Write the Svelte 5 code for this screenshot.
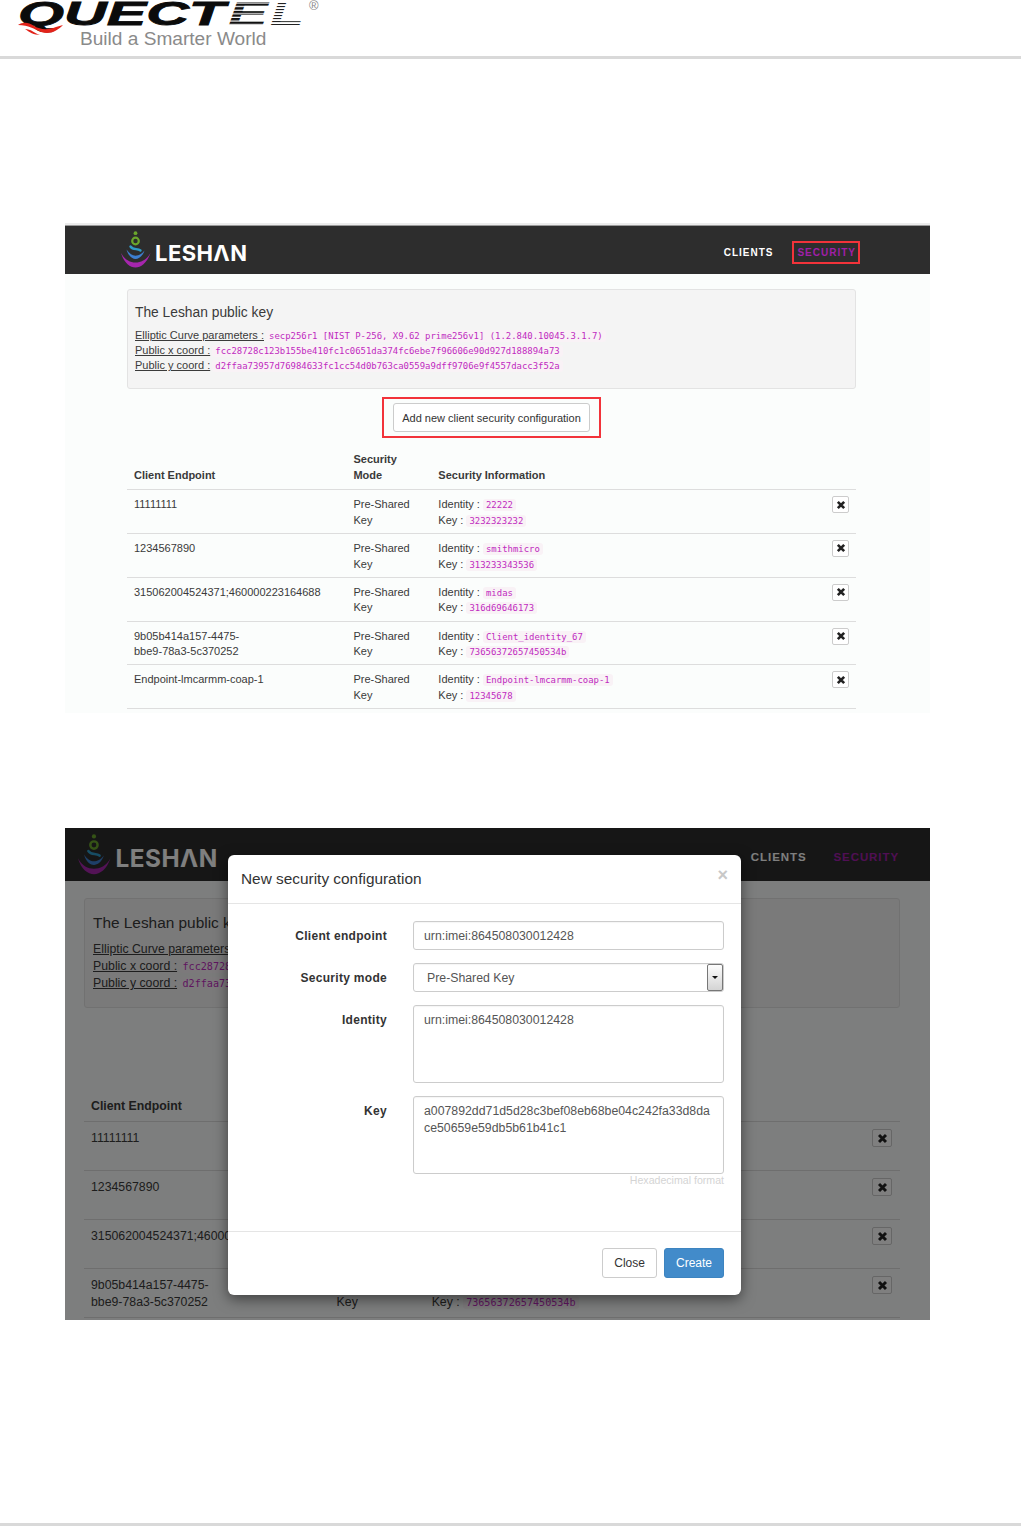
<script>
  const curve = 'secp256r1 [NIST P-256, X9.62 prime256v1] (1.2.840.10045.3.1.7)';
  const xCoord = 'fcc28728c123b155be410fc1c0651da374fc6ebe7f96606e90d927d188894a73';
  const yCoord = 'd2ffaa73957d76984633fc1cc54d0b763ca0559a9dff9706e9f4557dacc3f52a';
  const clients = [
    ['11111111', '22222', '3232323232'],
    ['1234567890', 'smithmicro', '313233343536'],
    ['315062004524371;460000223164688', 'midas', '316d69646173'],
    ['9b05b414a157-4475-\nbbe9-78a3-5c370252', 'Client_identity_67', '73656372657450534b'],
    ['Endpoint-lmcarmm-coap-1', 'Endpoint-lmcarmm-coap-1', '12345678']
  ];
  const endpoint = 'urn:imei:864508030012428';
</script>

{#snippet leshanApp(highlight)}
  <nav class="topnav">
    <svg class="leshan" viewBox="0 0 127 38" role="img" aria-label="Leshan">
      <circle cx="15.5" cy="2.2" r="1.9" fill="#6aa62c" />
      <circle cx="15.5" cy="10" r="3.3" fill="none" stroke="#6aa62c" stroke-width="2.2" />
      <path d="M10.500 15.500C13 19.500 17.500 17 20.500 19.500" fill="none" stroke="#2f9bc8" stroke-width="2.4" stroke-linecap="round" />
      <path d="M6.500 18.500C8.500 25.500 12.500 28 15.500 28C18.500 28 22.500 25.500 24.500 19.500C21.500 23.500 18.500 24.700 15.500 24.700C12.500 24.700 9.500 23 6.500 18.500z" fill="#3d7fd0" />
      <path d="M1 22C4 32 10 36.500 15.500 36.500C21 36.500 27 32 30.500 22C26.500 29 21 31.500 15.500 31.500C10 31.500 5 29 1 22z" fill="#a626ad" />
      <text class="leshan-word" x="35" y="30" textLength="92" lengthAdjust="spacing">LESHΛN</text>
    </svg>
    <div class="nav-links">
      <span class="nav-link">CLIENTS</span>
      <span class="nav-link active" class:outlined={highlight}>SECURITY</span>
    </div>
  </nav>
  <div class="content">
    <section class="well">
      <h4>The Leshan public key</h4>
      <div class="key-line"><u>Elliptic Curve parameters :</u> <code>{curve}</code></div>
      <div class="key-line"><u>Public x coord :</u> <code>{xCoord}</code></div>
      <div class="key-line"><u>Public y coord :</u> <code>{yCoord}</code></div>
    </section>
    <div class="add-row">
      <div class="add-box" class:outlined={highlight}>
        <button class="add-btn">Add new client security configuration</button>
      </div>
    </div>
    <table>
      <thead>
        <tr>
          <th class="c1">Client Endpoint</th>
          <th class="c2">Security<br />Mode</th>
          <th>Security Information</th>
          <th class="c4"></th>
        </tr>
      </thead>
      <tbody>
        {#each clients as [id, identity, key]}
          <tr>
            <td class="endpoint">{id}</td>
            <td>Pre-Shared Key</td>
            <td>
              <div class="info">Identity : <code>{identity}</code></div>
              <div class="info">Key : <code>{key}</code></div>
            </td>
            <td class="c4">
              <span class="del">
                <svg viewBox="0 0 12 12" aria-hidden="true"><path d="M2.200 2.200l7.600 7.600M9.800 2.200l-7.600 7.600" stroke="#222" stroke-width="3.200" /></svg>
              </span>
            </td>
          </tr>
        {/each}
      </tbody>
    </table>
  </div>
{/snippet}

<div class="page">
  <header class="doc-head">
    <svg class="quectel" viewBox="0 0 340 56" role="img" aria-label="Quectel">
      <defs>
        <pattern id="stripes" width="6" height="3.600" patternUnits="userSpaceOnUse">
          <rect width="6" height="2.400" fill="#111" />
        </pattern>
        <pattern id="fine" width="6" height="3" patternUnits="userSpaceOnUse">
          <rect width="6" height="1.100" fill="#222" />
        </pattern>
      </defs>
      <text class="q-word solid" x="18" y="25" textLength="207" lengthAdjust="spacingAndGlyphs">QUECT</text>
      <text class="q-word" x="228" y="25" textLength="40" lengthAdjust="spacingAndGlyphs" fill="url(#stripes)">E</text>
      <text class="q-word" x="270" y="25" textLength="34" lengthAdjust="spacingAndGlyphs" fill="url(#fine)">L</text>
      <path d="M18 25c5-3 10-3 16 1 7 4 14 4 22 1l7-2c-6 6-13 10-22 7-7-3-12-7-23-7z" fill="#e2231a" />
      <path d="M25 29c6 0 9 4 15 6-6 0-11-3-15-6z" fill="#e2231a" />
      <text class="q-reg" x="309" y="10">®</text>
      <text class="q-tag" x="80" y="45">Build a Smarter World</text>
    </svg>
  </header>

  <div class="strip"></div>
  <section class="screen s1">
    {@render leshanApp(true)}
  </section>

  <section class="screen s2">
    {@render leshanApp(false)}
    <div class="backdrop"></div>
    <div class="modal">
      <div class="m-head">
        <h4>New security configuration</h4>
        <span class="m-close">×</span>
      </div>
      <div class="m-body">
        <div class="f-row">
          <span class="f-label">Client endpoint</span>
          <div class="f-ctl h-input">{endpoint}</div>
        </div>
        <div class="f-row">
          <span class="f-label">Security mode</span>
          <div class="f-ctl h-input select">
            <span>Pre-Shared Key</span>
            <span class="sel-arrow"></span>
          </div>
        </div>
        <div class="f-row">
          <span class="f-label">Identity</span>
          <div class="f-ctl h-area">{endpoint}</div>
        </div>
        <div class="f-row last">
          <span class="f-label">Key</span>
          <div class="f-stack">
            <div class="f-ctl h-area">a007892dd71d5d28c3bef08eb68be04c242fa33d8da<br />ce50659e59db5b61b41c1</div>
            <div class="help">Hexadecimal format</div>
          </div>
        </div>
      </div>
      <div class="m-foot">
        <button class="m-btn">Close</button>
        <button class="m-btn primary">Create</button>
      </div>
    </div>
  </section>

  <div class="doc-foot"></div>
</div>

<style>
  :global(body) {
    margin: 0;
    background: #fff;
  }
  .page {
    height: 1526px;
    display: flex;
    flex-direction: column;
    overflow: hidden;
    font-family: "Liberation Sans", Arial, sans-serif;
  }
  .doc-head {
    height: 56px;
    border-bottom: 3px solid #d9d9d9;
    flex: none;
  }
  .quectel {
    display: block;
    width: 340px;
    height: 56px;
  }
  .q-word {
    font: italic 700 34px "Liberation Sans", sans-serif;
  }
  .q-word.solid {
    fill: #0b0b0b;
    stroke: #0b0b0b;
    stroke-width: 0.8px;
  }
  .q-reg {
    font: 13px "Liberation Sans", sans-serif;
    fill: #888;
  }
  .q-tag {
    font: 19.100px "Liberation Sans", sans-serif;
    fill: #8a8a8a;
  }
  .strip {
    margin: 164px 0 0 65px;
    width: 865px;
    height: 3px;
    background: #ececec;
    border-bottom: 1px solid #9a9a9a;
    box-sizing: border-box;
    flex: none;
  }
  .screen {
    position: relative;
    margin-left: 65px;
    width: 865px;
    flex: none;
    overflow: hidden;
    background: #fbfdfc;
    color: #3a3a3a;
    --pad: 7px;
  }
  .s1 {
    height: 487px;
    font-size: 11px;
    line-height: 15.600px;
    --left: 62px;
    --right: 74px;
  }
  .s2 {
    height: 492px;
    margin-top: 115px;
    font-size: 12.300px;
    line-height: 17px;
    --left: 19px;
    --right: 30px;
  }
  .topnav {
    height: 48px;
    background: #2d2d2d;
    display: flex;
    align-items: center;
    justify-content: space-between;
    padding: 0 74px 0 55px;
  }
  .s2 .topnav {
    height: 53px;
    padding: 0 31px 0 11px;
  }
  .leshan {
    width: 127px;
    height: 38px;
    display: block;
  }
  .s2 .leshan {
    width: 142px;
    height: 42px;
  }
  .leshan-word {
    font: 700 22px "Inter", "Liberation Sans", sans-serif;
    fill: #fff;
  }
  .nav-links {
    display: flex;
    align-items: center;
    gap: 24px;
    padding-top: 5px;
  }
  .s2 .nav-links {
    gap: 27px;
    padding-top: 6px;
  }
  .nav-link {
    font-size: 10px;
    font-weight: 700;
    letter-spacing: 0.1em;
    color: #fff;
  }
  .s2 .nav-link {
    font-size: 11.500px;
    letter-spacing: 0.08em;
  }
  .nav-link.active {
    color: #a01fa8;
  }
  .nav-link.outlined {
    outline: 2px solid #f2333a;
    padding: 2px 2px 2px 3px;
    margin: -2px -2px -2px -3px;
  }
  .content {
    padding: 15px var(--right) 0 var(--left);
  }
  .s2 .content {
    padding-top: 17px;
  }
  .well {
    box-sizing: border-box;
    height: 100px;
    background: #f4f4f4;
    border: 1px solid #e3e3e3;
    border-radius: 3px;
    padding: 14px 7px;
  }
  .s2 .well {
    height: 110px;
    padding: 14px 8px;
  }
  .well h4 {
    margin: 0 0 6px;
    font-size: 13.800px;
    font-weight: 400;
    line-height: 18px;
  }
  .s2 .well h4 {
    font-size: 15.400px;
    margin-bottom: 8px;
    line-height: 20px;
  }
  .key-line {
    height: 15.200px;
    line-height: 15.200px;
    white-space: nowrap;
  }
  .s2 .key-line {
    height: 17px;
    line-height: 17px;
  }
  .key-line code {
    margin-left: -1px;
  }
  code {
    font-family: "DejaVu Sans Mono", monospace;
    font-size: 8.950px;
    color: #bf2bc0;
    background: #f9f2f6;
    padding: 1px 3px;
    border-radius: 3px;
    white-space: nowrap;
  }
  .s2 code {
    font-size: 10.100px;
  }
  .add-row {
    box-sizing: border-box;
    display: flex;
    justify-content: center;
    height: 64px;
    align-items: flex-start;
    padding-top: 8px;
  }
  .add-box {
    padding: 4px 11px;
    line-height: 0;
  }
  .add-box.outlined {
    border: 2px solid #f2333a;
    padding: 4px 9px;
  }
  .add-btn {
    height: 29px;
    padding: 0 8.500px;
    font: 11px "Liberation Sans", sans-serif;
    color: #333;
    background: #fff;
    border: 1px solid #ccc;
    border-radius: 3px;
  }
  .s2 .add-row {
    height: 73px;
    padding-top: 20px;
  }
  table {
    width: 100%;
    border-collapse: collapse;
    table-layout: fixed;
    margin-top: -1px;
  }
  .s2 table {
    margin-top: 0;
  }
  th {
    box-sizing: border-box;
    text-align: left;
    vertical-align: bottom;
    font-weight: 700;
    padding: 0 var(--pad) 6px;
    border-bottom: 1px solid #ddd;
  }
  .c1 {
    width: 30.1%;
  }
  .c2 {
    width: 11.65%;
  }
  th.c4 {
    width: 36px;
  }
  td {
    vertical-align: top;
    padding: 7px var(--pad) 0;
    height: 35.800px;
    border-bottom: 1px solid #ddd;
    box-sizing: content-box;
  }
  .s2 td {
    height: 40px;
    padding-top: 8px;
  }
  .endpoint {
    white-space: pre-line;
  }
  .info {
    height: 15.600px;
    white-space: nowrap;
  }
  .s2 .info {
    height: 17px;
  }
  .del {
    display: flex;
    align-items: center;
    justify-content: center;
    width: 17px;
    height: 17px;
    margin: -1px 0 0 auto;
    box-sizing: border-box;
    border: 1px solid #ccc;
    border-radius: 2px;
    background: #fff;
  }
  .s2 .del {
    width: 20px;
    height: 18px;
    margin-right: 1px;
  }
  .del svg {
    width: 10px;
    height: 10px;
  }
  .s2 .del svg {
    width: 11px;
    height: 11px;
  }
  .backdrop {
    position: absolute;
    inset: 0;
    background: rgba(0, 0, 0, 0.5);
  }
  .modal {
    position: absolute;
    left: 163px;
    top: 27px;
    width: 513px;
    height: 440px;
    display: flex;
    flex-direction: column;
    box-sizing: border-box;
    background: #fff;
    border-radius: 6px;
    box-shadow: 0 4px 14px rgba(0, 0, 0, 0.5);
    color: #333;
  }
  .m-head {
    height: 48px;
    box-sizing: content-box;
    border-bottom: 1px solid #e5e5e5;
    padding: 0 13px;
    display: flex;
    align-items: flex-start;
    justify-content: space-between;
    flex: none;
  }
  .m-head h4 {
    margin: 13px 0 0;
    font-size: 15.400px;
    font-weight: 400;
    line-height: 21px;
  }
  .m-close {
    font-size: 18px;
    font-weight: 700;
    line-height: 18px;
    color: #c8c8c8;
    margin: 11px 0 0 0;
  }
  .m-body {
    flex: 1;
    padding: 17px 17px 0 0;
    display: flex;
    flex-direction: column;
    gap: 13px;
  }
  .f-row {
    display: grid;
    grid-template-columns: 159px 1fr;
    column-gap: 26px;
    align-items: start;
  }
  .f-label {
    text-align: right;
    font-weight: 700;
    font-size: 12px;
    letter-spacing: 0.3px;
    padding-top: 7px;
  }
  .f-ctl {
    box-sizing: border-box;
    border: 1px solid #ccc;
    border-radius: 3px;
    padding: 6px 10px;
    color: #555;
    background: #fff;
    line-height: 17px;
    box-shadow: inset 0 1px 1px rgba(0, 0, 0, 0.04);
  }
  .h-input {
    height: 29px;
  }
  .h-area {
    height: 78px;
  }
  .select {
    display: flex;
    align-items: center;
    justify-content: space-between;
    padding: 1px 0 0 13px;
  }
  .sel-arrow {
    box-sizing: border-box;
    align-self: flex-start;
    width: 16px;
    height: 27px;
    margin-top: -1px;
    border: 1px solid #777;
    border-radius: 2px;
    background: linear-gradient(#fdfdfd, #d4d4d4);
    display: flex;
    align-items: center;
    justify-content: center;
  }
  .sel-arrow::after {
    content: "";
    border-left: 3px solid transparent;
    border-right: 3px solid transparent;
    border-top: 3px solid #111;
  }
  .help {
    text-align: right;
    font-size: 10.600px;
    line-height: 13px;
    color: #d4d4d4;
  }
  .m-foot {
    height: 63px;
    box-sizing: content-box;
    border-top: 1px solid #e5e5e5;
    display: flex;
    justify-content: flex-end;
    align-items: flex-start;
    gap: 7px;
    padding: 0 17px;
    flex: none;
  }
  .m-btn {
    margin-top: 16px;
    height: 30px;
    font: 12px "Liberation Sans", sans-serif;
    padding: 0 11px;
    color: #333;
    background: #fff;
    border: 1px solid #ccc;
    border-radius: 3px;
  }
  .m-btn.primary {
    background: #428bca;
    border-color: #3d84c0;
    color: #fff;
  }
  .doc-foot {
    margin-top: auto;
    height: 3px;
    background: #d9d9d9;
    flex: none;
  }
</style>
